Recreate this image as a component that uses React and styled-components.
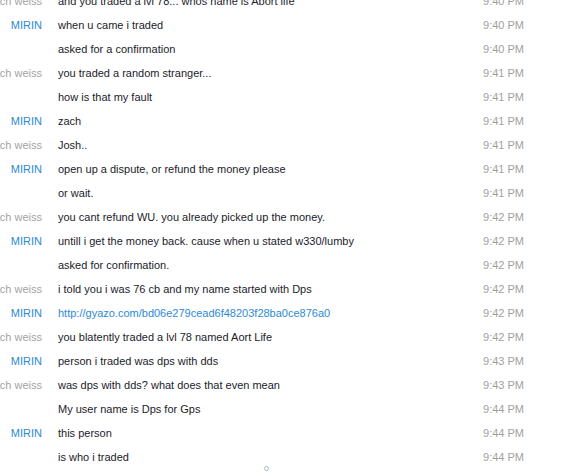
import React from "react";
import styled, { createGlobalStyle } from "styled-components";

const GlobalStyle = createGlobalStyle`
  html, body {
    margin: 0;
    padding: 0;
    background: #fff;
  }
  body {
    font-family: Tahoma, "Liberation Sans", Arial, sans-serif;
    font-size: 11px;
  }
`;

const ChatWindow = styled.div`
  position: relative;
  width: 568px;
  height: 473px;
  overflow: hidden;
  background: #fff;
`;

const List = styled.div`
  display: flex;
  flex-direction: column;
  margin-top: -11px;
`;

const Row = styled.div`
  display: flex;
  align-items: center;
  height: 24px;
  padding-right: 44px;
`;

const Sender = styled.div`
  width: 42px;
  flex-shrink: 0;
  display: flex;
  justify-content: flex-end;
  white-space: nowrap;
  color: ${(props) => (props.me ? "#2b8ad6" : "#a3a3a3")};
`;

const Message = styled.div`
  flex: 1;
  margin-left: 16px;
  white-space: nowrap;
  color: ${(props) => (props.link ? "#2b8ad6" : "#1b1b2b")};
`;

const Time = styled.div`
  color: #a0a0a0;
  white-space: nowrap;
`;

const Grip = styled.div`
  position: absolute;
  left: 264px;
  top: 466px;
  width: 3px;
  height: 3px;
  border: 1px solid #9fbfd6;
  border-radius: 50%;
`;

const messages = [
  ["zach weiss", "and you traded a lvl 78... whos name is Abort life", "9:40 PM"],
  ["MIRIN", "when u came i traded", "9:40 PM"],
  ["", "asked for a confirmation", "9:40 PM"],
  ["zach weiss", "you traded a random stranger...", "9:41 PM"],
  ["", "how is that my fault", "9:41 PM"],
  ["MIRIN", "zach", "9:41 PM"],
  ["zach weiss", "Josh..", "9:41 PM"],
  ["MIRIN", "open up a dispute, or refund the money please", "9:41 PM"],
  ["", "or wait.", "9:41 PM"],
  ["zach weiss", "you cant refund WU. you already picked up the money.", "9:42 PM"],
  ["MIRIN", "untill i get the money back. cause when u stated w330/lumby", "9:42 PM"],
  ["", "asked for confirmation.", "9:42 PM"],
  ["zach weiss", "i told you i was 76 cb and my name started with Dps", "9:42 PM"],
  ["MIRIN", "http://gyazo.com/bd06e279cead6f48203f28ba0ce876a0", "9:42 PM", true],
  ["zach weiss", "you blatently traded a lvl 78 named Aort Life", "9:42 PM"],
  ["MIRIN", "person i traded was dps with dds", "9:43 PM"],
  ["zach weiss", "was dps with dds? what does that even mean", "9:43 PM"],
  ["", "My user name is Dps for Gps", "9:44 PM"],
  ["MIRIN", "this person", "9:44 PM"],
  ["", "is who i traded", "9:44 PM"],
];

export default function App() {
  return (
    <ChatWindow>
      <GlobalStyle />
      <List>
        {messages.map(([who, text, time, link], i) => (
          <Row key={i}>
            <Sender me={who === "MIRIN"}>{who}</Sender>
            <Message link={link}>{text}</Message>
            <Time>{time}</Time>
          </Row>
        ))}
      </List>
      <Grip />
    </ChatWindow>
  );
}
